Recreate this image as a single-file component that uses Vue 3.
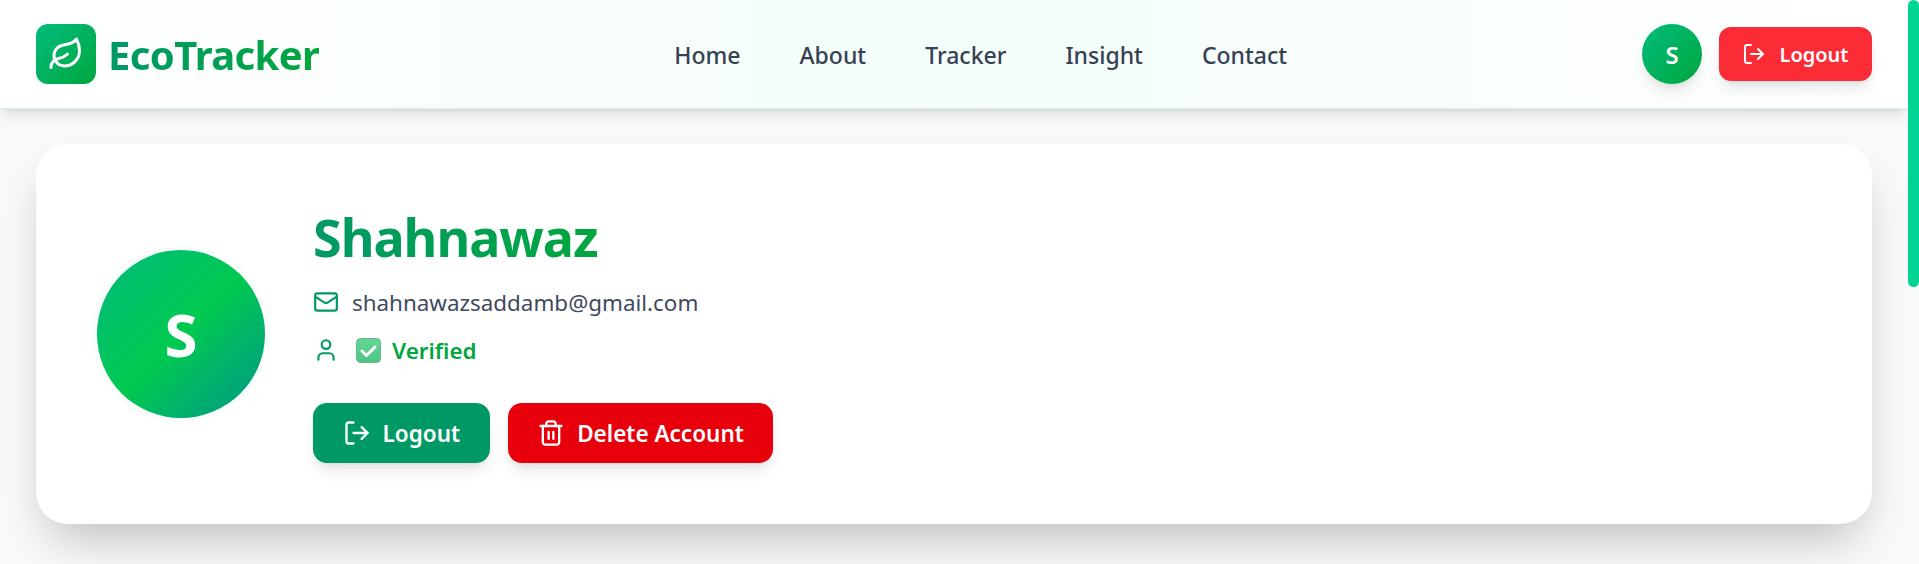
<template>
  <div class="shell">
    <div class="page">
      <header class="navbar">
        <div class="brand">
          <span class="brand-icon">
            <svg width="36" height="36" viewBox="0 0 24 24" fill="none" stroke="currentColor" stroke-width="2" stroke-linecap="round" stroke-linejoin="round">
              <path d="M11 20A7 7 0 0 1 9.8 6.1C15.5 5 17 4.48 19 2c1 2 2 4.18 2 8 0 5.5-4.78 10-10 10Z" />
              <path d="M2 21c0-3 1.85-5.36 5.08-6C9.5 14.52 12 13 13 12" />
            </svg>
          </span>
          <span class="brand-name">EcoTracker</span>
        </div>
        <nav class="nav-links">
          <a v-for="link in links" :key="link" class="nav-link">{{ link }}</a>
        </nav>
        <div class="nav-actions">
          <span class="nav-avatar">S</span>
          <button class="nav-logout">
            <svg width="24" height="24" viewBox="0 0 24 24" fill="none" stroke="currentColor" stroke-width="2" stroke-linecap="round" stroke-linejoin="round">
              <path d="M9 21H5a2 2 0 0 1-2-2V5a2 2 0 0 1 2-2h4" />
              <path d="m16 17 5-5-5-5" />
              <path d="M21 12H9" />
            </svg>
            Logout
          </button>
        </div>
      </header>

      <main class="content">
        <section class="profile-card">
          <div class="profile-avatar">S</div>
          <div class="profile-info">
            <h1 class="profile-name">Shahnawaz</h1>
            <div class="info-row email-row">
              <svg width="26" height="26" viewBox="0 0 24 24" fill="none" stroke="currentColor" stroke-width="2" stroke-linecap="round" stroke-linejoin="round">
                <path d="m22 7-8.99 5.73a2 2 0 0 1-2.02 0L2 7" />
                <rect x="2" y="4" width="20" height="16" rx="2" />
              </svg>
              <span>shahnawazsaddamb@gmail.com</span>
            </div>
            <div class="info-row verified-row">
              <svg class="user-icon" width="26" height="26" viewBox="0 0 24 24" fill="none" stroke="currentColor" stroke-width="2" stroke-linecap="round" stroke-linejoin="round">
                <path d="M19 21v-2a4 4 0 0 0-4-4H9a4 4 0 0 0-4 4v2" />
                <circle cx="12" cy="7" r="4" />
              </svg>
              <svg class="check-box" width="25" height="25" viewBox="0 0 25 25">
                <defs>
                  <linearGradient id="checkFill" x1="0" y1="0" x2="0" y2="1">
                    <stop offset="0" stop-color="#62d896" />
                    <stop offset="1" stop-color="#4fc585" />
                  </linearGradient>
                </defs>
                <rect x="0.5" y="0.5" width="24" height="24" rx="4" fill="url(#checkFill)" stroke="#6bb78d" />
                <path d="M6 13l4.5 4.5 8.5-8.5" fill="none" stroke="#ffffff" stroke-width="3" stroke-linecap="round" stroke-linejoin="round" />
              </svg>
              <span class="verified-text">Verified</span>
            </div>
            <div class="profile-actions">
              <button class="action-btn logout-btn">
                <svg width="28" height="28" viewBox="0 0 24 24" fill="none" stroke="currentColor" stroke-width="2" stroke-linecap="round" stroke-linejoin="round">
                  <path d="M9 21H5a2 2 0 0 1-2-2V5a2 2 0 0 1 2-2h4" />
                  <path d="m16 17 5-5-5-5" />
                  <path d="M21 12H9" />
                </svg>
                Logout
              </button>
              <button class="action-btn delete-btn">
                <svg width="28" height="28" viewBox="0 0 24 24" fill="none" stroke="currentColor" stroke-width="2" stroke-linecap="round" stroke-linejoin="round">
                  <path d="M3 6h18" />
                  <path d="M19 6v14c0 1-1 2-2 2H7c-1 0-2-1-2-2V6" />
                  <path d="M8 6V4c0-1 1-2 2-2h4c1 0 2 1 2 2v2" />
                  <line x1="10" y1="11" x2="10" y2="17" />
                  <line x1="14" y1="11" x2="14" y2="17" />
                </svg>
                Delete Account
              </button>
            </div>
          </div>
        </section>
      </main>
    </div>
    <div class="scroll-track">
      <div class="scroll-thumb"></div>
    </div>
  </div>
</template>

<script setup>
const links = ["Home", "About", "Tracker", "Insight", "Contact"];
</script>

<style scoped>
.shell {
  height: 100vh;
  display: flex;
  overflow: hidden;
  background: #f8fafc;
  font-family: "Noto Sans", "Open Sans", sans-serif;
  color: #364153;
}

.page {
  flex: 1;
  min-width: 0;
}

.scroll-track {
  width: 11px;
  flex-shrink: 0;
  background: #f8fafc;
  position: relative;
  z-index: 2;
}

.scroll-thumb {
  height: 287px;
  background: #00d492;
  border-radius: 6px;
}

.navbar {
  height: 109px;
  box-sizing: border-box;
  padding: 0 36px;
  display: flex;
  align-items: center;
  justify-content: space-between;
  background: linear-gradient(90deg, #ffffff, #f3fdf9 50%, #ffffff);
  box-shadow: 0 10px 15px -3px rgba(0, 0, 0, 0.1), 0 4px 6px -4px rgba(0, 0, 0, 0.1);
  border-bottom: 1px solid #dcefe8;
}

.brand {
  display: flex;
  align-items: center;
  gap: 12px;
}

.brand-icon {
  width: 60px;
  height: 60px;
  border-radius: 12px;
  display: flex;
  align-items: center;
  justify-content: center;
  color: #fff;
  background: linear-gradient(135deg, #00bc7d, #00a63e);
}

.brand-name {
  font-size: 40px;
  font-weight: 700;
  letter-spacing: -0.6px;
  background: linear-gradient(90deg, #009966, #00a63e);
  -webkit-background-clip: text;
  background-clip: text;
  color: transparent;
}

.nav-links {
  display: flex;
  gap: 59px;
  padding-top: 2px;
}

.nav-link {
  font-size: 23px;
  font-weight: 500;
  color: #364153;
}

.nav-actions {
  display: flex;
  align-items: center;
  gap: 17px;
}

.nav-avatar {
  width: 60px;
  height: 60px;
  border-radius: 50%;
  display: flex;
  align-items: center;
  justify-content: center;
  color: #fff;
  font-size: 24px;
  font-weight: 600;
  background: linear-gradient(135deg, #00bc7d, #00a63e);
  box-shadow: 0 10px 15px -3px rgba(0, 0, 0, 0.1), 0 4px 6px -4px rgba(0, 0, 0, 0.1);
}

.nav-logout {
  height: 54px;
  border: none;
  border-radius: 12px;
  padding: 0 23.5px;
  display: flex;
  align-items: center;
  gap: 13px;
  color: #fff;
  font-family: inherit;
  font-size: 20px;
  font-weight: 600;
  background: #fb2c36;
  box-shadow: 0 10px 15px -3px rgba(0, 0, 0, 0.1), 0 4px 6px -4px rgba(0, 0, 0, 0.1);
}

.content {
  padding: 35px 36px;
}

.profile-card {
  height: 380px;
  box-sizing: border-box;
  padding: 0 61px;
  display: flex;
  align-items: center;
  gap: 48px;
  background: #fff;
  border-radius: 32px;
  box-shadow: 0 25px 50px -12px rgba(0, 0, 0, 0.25);
}

.profile-avatar {
  width: 168px;
  height: 168px;
  flex-shrink: 0;
  border-radius: 50%;
  display: flex;
  align-items: center;
  justify-content: center;
  color: #fff;
  font-size: 60px;
  font-weight: 700;
  background: linear-gradient(135deg, #00bc7d, #00c950 50%, #009689);
  box-shadow: 0 0 0 5px #f9fdfc;
}

.profile-name {
  margin: 0 0 17px;
  font-size: 52px;
  line-height: 64px;
  font-weight: 700;
  letter-spacing: -1px;
  width: fit-content;
  background: linear-gradient(90deg, #009966, #00a63e);
  -webkit-background-clip: text;
  background-clip: text;
  color: transparent;
}

.info-row {
  display: flex;
  align-items: center;
  font-size: 22.4px;
  color: #009966;
  height: 32px;
}

.email-row {
  gap: 13px;
  margin-bottom: 16px;
}

.email-row span {
  color: #3f4a5e;
}

.verified-row {
  gap: 11px;
}

.user-icon {
  margin-right: 6px;
}

.verified-text {
  color: #00a63e;
  font-weight: 600;
}

.profile-actions {
  display: flex;
  gap: 18px;
  margin-top: 37px;
}

.action-btn {
  height: 60px;
  border: none;
  border-radius: 14px;
  padding: 0 29.5px;
  display: flex;
  align-items: center;
  gap: 12px;
  color: #fff;
  font-family: inherit;
  font-size: 22.5px;
  font-weight: 600;
  box-shadow: 0 10px 15px -3px rgba(0, 0, 0, 0.1), 0 4px 6px -4px rgba(0, 0, 0, 0.1);
}

.logout-btn {
  background: #009966;
}

.delete-btn {
  background: #e7000b;
}
</style>
